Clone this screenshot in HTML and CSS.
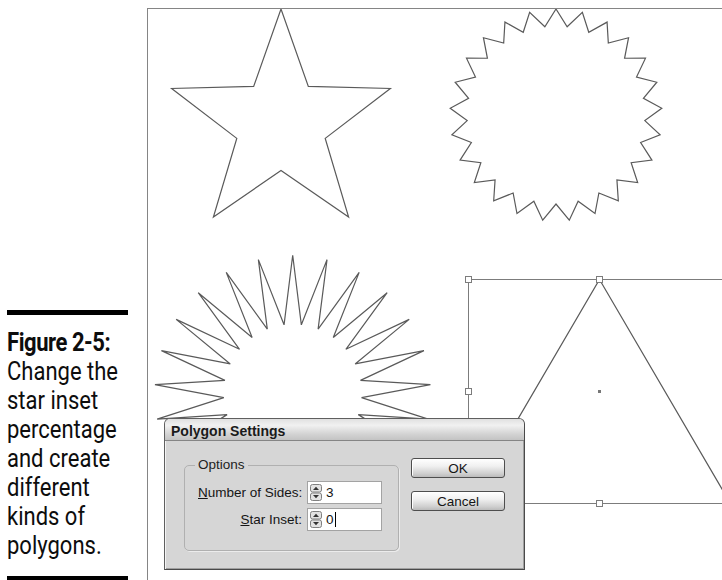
FILE: index.html
```html
<!DOCTYPE html>
<html lang="en">
<head>
<meta charset="utf-8">
<title>Figure 2-5: Polygon Settings</title>
<link rel="stylesheet" href="styles.css">
</head>
<body>
<div class="page">
  <aside class="caption">
    <div class="rule"></div>
    <p class="caption-text"><b>Figure 2-5:</b><br>Change the<br>star inset<br>percentage<br>and create<br>different<br>kinds of<br>polygons.</p>
    <div class="rule"></div>
  </aside>

  <main class="canvas">
    <svg class="art" viewBox="148 9 574 571" width="574" height="571">
      <polygon class="shape" data-cx="281" data-cy="124" data-outer="115" data-inner="46.5" data-n="5"/>
      <polygon class="shape" data-cx="556" data-cy="115" data-outer="106" data-inner="89" data-n="25"/>
      <polygon class="shape" data-cx="292.7" data-cy="393.3" data-outer="138" data-inner="69" data-n="25"/>
      <polygon class="shape" points="599.5,279.5 730.5,503.5 468.5,503.5"/>
      <rect class="bbox" x="468.5" y="279.5" width="262" height="224"/>
      <rect class="handle" x="465.5" y="276.5" width="6" height="6"/>
      <rect class="handle" x="596.5" y="276.5" width="6" height="6"/>
      <rect class="handle" x="465.5" y="388.5" width="6" height="6"/>
      <rect class="handle" x="596.5" y="500.5" width="6" height="6"/>
      <rect class="center-dot" x="598" y="390" width="3" height="3"/>
    </svg>

    <div class="dialog">
      <div class="titlebar">Polygon Settings</div>
      <div class="dialog-body">
        <fieldset class="options">
          <legend>Options</legend>
          <div class="field-grid">
            <label class="field-label"><u>N</u>umber of Sides:</label>
            <div class="spin-input">
              <svg class="spin" viewBox="0 0 12 17" width="12" height="17">
                <rect class="spin-btn" x="0.5" y="0.5" width="11" height="7.5" rx="2"/>
                <rect class="spin-btn" x="0.5" y="9" width="11" height="7.5" rx="2"/>
                <path class="spin-arrow" d="M3 6 L6 2.8 L9 6 Z"/>
                <path class="spin-arrow" d="M3 11 L6 14.2 L9 11 Z"/>
              </svg>
              <span class="value">3</span>
            </div>
            <label class="field-label"><u>S</u>tar Inset:</label>
            <div class="spin-input">
              <svg class="spin" viewBox="0 0 12 17" width="12" height="17">
                <rect class="spin-btn" x="0.5" y="0.5" width="11" height="7.5" rx="2"/>
                <rect class="spin-btn" x="0.5" y="9" width="11" height="7.5" rx="2"/>
                <path class="spin-arrow" d="M3 6 L6 2.8 L9 6 Z"/>
                <path class="spin-arrow" d="M3 11 L6 14.2 L9 11 Z"/>
              </svg>
              <span class="value">0</span><span class="caret"></span>
            </div>
          </div>
        </fieldset>
        <div class="buttons">
          <button class="btn" type="button">OK</button>
          <button class="btn" type="button">Cancel</button>
        </div>
      </div>
    </div>
  </main>
</div>
<script src="script.js"></script>
</body>
</html>
```

FILE: styles.css
```css
* { box-sizing: border-box; }

html, body {
  margin: 0;
  padding: 0;
  background: #fff;
}

body {
  font-family: "Liberation Sans", Arial, sans-serif;
  color: #111;
}

.page {
  display: flex;
  height: 580px;
  overflow: hidden;
}

/* ---------- caption column ---------- */
.caption {
  flex: 0 0 147px;
  padding: 310px 0 0 7px;
}

.rule {
  width: 121px;
  height: 5px;
  background: #000;
}

.caption-text {
  margin: 13px 0 16px;
  font-family: Roboto, "Liberation Sans", sans-serif;
  font-size: 25px;
  line-height: 29px;
  color: #0d0d0d;
  white-space: nowrap;
  transform: scaleX(0.88);
  transform-origin: 0 0;
}

.caption-text b {
  font-weight: 700;
  letter-spacing: -0.5px;
}

/* ---------- drawing canvas ---------- */
.canvas {
  flex: 1 1 auto;
  position: relative;
  margin-top: 8px;
  height: 572px;
  border-top: 1px solid #858585;
  border-left: 1px solid #858585;
  overflow: hidden;
}

.art { display: block; }

.shape {
  fill: none;
  stroke: #5a5a5a;
  stroke-width: 1.2;
}

.bbox {
  fill: none;
  stroke: #7c7c7c;
  stroke-width: 1;
}

.handle {
  fill: #fff;
  stroke: #7c7c7c;
  stroke-width: 1;
}

.center-dot { fill: #777; }

/* ---------- dialog ---------- */
.dialog {
  position: absolute;
  left: 16px;
  top: 409px;
  width: 361px;
  height: 152px;
  background: #d6d6d6;
  border: 1px solid #5f5f5f;
  border-right-color: #4a4a4a;
  border-bottom-color: #4a4a4a;
  border-radius: 6px 6px 0 0;
  box-shadow: inset 1px 0 0 #f4f4f4, inset -1px -1px 0 #a0a0a0;
  font-size: 13.5px;
  color: #151515;
}

.titlebar {
  height: 22px;
  padding: 3px 0 0 6px;
  line-height: 18px;
  font-weight: 700;
  font-size: 14px;
  color: #1a1a1a;
  border-bottom: 1px solid #858585;
  border-radius: 5px 5px 0 0;
  background: linear-gradient(to bottom, #e0e0e0 0%, #f1f1f1 30%, #d4d4d4 70%, #c3c3c3 100%);
}

.dialog-body {
  display: flex;
  align-items: flex-start;
  gap: 12px;
  padding: 16px 0 0 19px;
}

.options {
  width: 215px;
  margin: 0;
  padding: 8px 15px 19px 13px;
  border: 1px solid #b0b0b0;
  border-radius: 5px;
  box-shadow: 1px 1px 0 #ececec;
  min-width: 0;
}

.options legend {
  padding: 0 3px;
  margin-left: -3px;
  line-height: 16px;
  color: #222;
}

.field-grid {
  display: grid;
  grid-template-columns: 104px 75px;
  column-gap: 5px;
  row-gap: 4px;
  align-items: center;
}

.field-label {
  text-align: right;
  white-space: nowrap;
}

.spin-input {
  display: flex;
  align-items: center;
  gap: 4px;
  height: 23px;
  padding-left: 2px;
  background: #fff;
  border: 1px solid #a3a3a3;
}

.spin { display: block; flex: none; }

.spin-btn {
  fill: #e3e3e3;
  stroke: #808080;
  stroke-width: 1;
}

.spin-arrow { fill: #333; }

.value { line-height: 16px; }

.caret {
  width: 1px;
  height: 15px;
  margin-left: -3px;
  background: #000;
}

.buttons {
  display: flex;
  flex-direction: column;
  gap: 13px;
  padding-top: 1px;
}

.btn {
  width: 94px;
  height: 20px;
  padding: 0;
  font-family: "Liberation Sans", Arial, sans-serif;
  font-size: 13.5px;
  color: #151515;
  border: 1px solid #4e4e4e;
  border-radius: 3px;
  background: linear-gradient(to bottom, #ffffff 0%, #f0f0f0 40%, #d0d0d0 80%, #bbbbbb 100%);
  box-shadow: inset 1px 1px 0 #fff;
}
```

FILE: script.js
```js
document.querySelectorAll('polygon[data-n]').forEach(function (poly) {
  var cx = +poly.dataset.cx;
  var cy = +poly.dataset.cy;
  var outer = +poly.dataset.outer;
  var inner = +poly.dataset.inner;
  var n = +poly.dataset.n;
  var pts = [];
  for (var i = 0; i < 2 * n; i++) {
    var a = (-90 + i * 180 / n) * Math.PI / 180;
    var rad = i % 2 ? inner : outer;
    pts.push((cx + rad * Math.cos(a)).toFixed(2) + ',' + (cy + rad * Math.sin(a)).toFixed(2));
  }
  poly.setAttribute('points', pts.join(' '));
});
```
